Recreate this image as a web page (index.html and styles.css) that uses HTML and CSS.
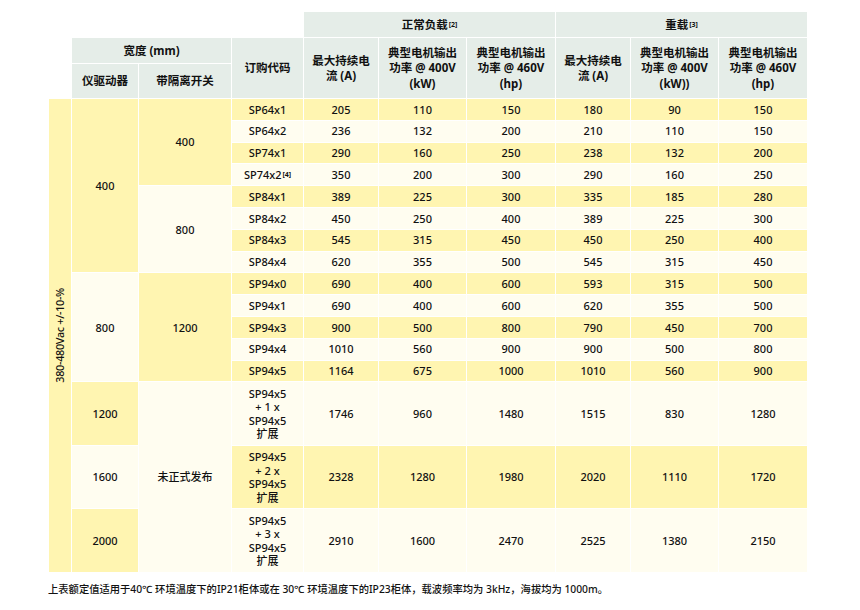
FILE: index.html
```html
<!DOCTYPE html>
<html lang="zh-CN">
<head>
<meta charset="utf-8">
<title>额定值表</title>
<link rel="stylesheet" href="styles.css">
</head>
<body>
<div class="page">
  <div class="grid">
    <div class="row">
      <div class="blank c4"></div>
      <div class="hd c3">正常负载<sup>[2]</sup></div>
      <div class="hd c3">重载<sup>[3]</sup></div>
    </div>
    <div class="row">
      <div class="blank r2"></div>
      <div class="hd c2">宽度 (mm)</div>
      <div class="hd r2">订购代码</div>
      <div class="hd r2">最大持续电<br>流 (A)</div>
      <div class="hd r2">典型电机输出<br>功率 @ 400V<br>(kW)</div>
      <div class="hd r2">典型电机输出<br>功率 @ 460V<br>(hp)</div>
      <div class="hd r2">最大持续电<br>流 (A)</div>
      <div class="hd r2">典型电机输出<br>功率 @ 400V<br>(kW))</div>
      <div class="hd r2">典型电机输出<br>功率 @ 460V<br>(hp)</div>
    </div>
    <div class="row">
      <div class="hd">仪驱动器</div>
      <div class="hd">带隔离开关</div>
    </div>

    <div class="row y">
      <div class="volt r16"><span class="vtext">380-480Vac +/-10-%</span></div>
      <div class="g y r8">400</div>
      <div class="g y r4">400</div>
      <div>SP64x1</div><div>205</div><div>110</div><div>150</div><div>180</div><div>90</div><div>150</div>
    </div>
    <div class="row l">
      <div>SP64x2</div><div>236</div><div>132</div><div>200</div><div>210</div><div>110</div><div>150</div>
    </div>
    <div class="row y">
      <div>SP74x1</div><div>290</div><div>160</div><div>250</div><div>238</div><div>132</div><div>200</div>
    </div>
    <div class="row l">
      <div>SP74x2<sup>[4]</sup></div><div>350</div><div>200</div><div>300</div><div>290</div><div>160</div><div>250</div>
    </div>
    <div class="row y">
      <div class="g l r4">800</div>
      <div>SP84x1</div><div>389</div><div>225</div><div>300</div><div>335</div><div>185</div><div>280</div>
    </div>
    <div class="row l">
      <div>SP84x2</div><div>450</div><div>250</div><div>400</div><div>389</div><div>225</div><div>300</div>
    </div>
    <div class="row y">
      <div>SP84x3</div><div>545</div><div>315</div><div>450</div><div>450</div><div>250</div><div>400</div>
    </div>
    <div class="row l">
      <div>SP84x4</div><div>620</div><div>355</div><div>500</div><div>545</div><div>315</div><div>450</div>
    </div>
    <div class="row y">
      <div class="g l r5">800</div>
      <div class="g y r5">1200</div>
      <div>SP94x0</div><div>690</div><div>400</div><div>600</div><div>593</div><div>315</div><div>500</div>
    </div>
    <div class="row l">
      <div>SP94x1</div><div>690</div><div>400</div><div>600</div><div>620</div><div>355</div><div>500</div>
    </div>
    <div class="row y">
      <div>SP94x3</div><div>900</div><div>500</div><div>800</div><div>790</div><div>450</div><div>700</div>
    </div>
    <div class="row l">
      <div>SP94x4</div><div>1010</div><div>560</div><div>900</div><div>900</div><div>500</div><div>800</div>
    </div>
    <div class="row y">
      <div>SP94x5</div><div>1164</div><div>675</div><div>1000</div><div>1010</div><div>560</div><div>900</div>
    </div>
    <div class="row l">
      <div class="g y">1200</div>
      <div class="g l r3">未正式发布</div>
      <div>SP94x5<br>+ 1 x<br>SP94x5<br>扩展</div><div>1746</div><div>960</div><div>1480</div><div>1515</div><div>830</div><div>1280</div>
    </div>
    <div class="row y">
      <div class="g l">1600</div>
      <div>SP94x5<br>+ 2 x<br>SP94x5<br>扩展</div><div>2328</div><div>1280</div><div>1980</div><div>2020</div><div>1110</div><div>1720</div>
    </div>
    <div class="row l">
      <div class="g y">2000</div>
      <div>SP94x5<br>+ 3 x<br>SP94x5<br>扩展</div><div>2910</div><div>1600</div><div>2470</div><div>2525</div><div>1380</div><div>2150</div>
    </div>
  </div>
  <p class="note">上表额定值适用于40℃ 环境温度下的IP21柜体或在 30℃ 环境温度下的IP23柜体，载波频率均为 3kHz，海拔均为 1000m。</p>
</div>
</body>
</html>
```

FILE: styles.css
```css
html, body {
  margin: 0;
  padding: 0;
  background: #ffffff;
}

body {
  font-family: "Noto Sans", "Noto Sans CJK SC", sans-serif;
  color: #111111;
}

.page {
  padding: 12px 0 0 49px;
}

.grid {
  display: grid;
  grid-template-columns: 22px 66px 92px 71px 74px 87px 88px 74px 87px 88px;
  grid-template-rows: 25px 25px 34px repeat(13, 20.8px) repeat(3, 62.5px);
  gap: 1px;
  width: 758px;
  background: #ffffff;
}

.grid > .row {
  display: contents;
}

.row > div {
  display: flex;
  align-items: center;
  justify-content: center;
  text-align: center;
  font-size: 11px;
  font-weight: 500;
  line-height: 13.5px;
}

.row.y > div {
  background: #fff5b1;
}

.row.l > div {
  background: #fffdf0;
}

.row > .g.y {
  background: #fff5b1;
}

.row > .g.l {
  background: #fffdf0;
}

.row > .blank {
  background: #ffffff;
}

.row > .hd {
  background: #e5ede8;
  font-weight: 700;
  font-size: 11.5px;
  line-height: 15.5px;
}

.row > .volt {
  background: #e5ede8;
}

.vtext {
  display: block;
  writing-mode: vertical-rl;
  transform: rotate(180deg);
  font-size: 10.8px;
  letter-spacing: -0.3px;
  line-height: 14px;
  white-space: nowrap;
}

.c2 { grid-column: span 2; }
.c3 { grid-column: span 3; }
.c4 { grid-column: span 4; }
.r2 { grid-row: span 2; }
.r3 { grid-row: span 3; }
.r4 { grid-row: span 4; }
.r5 { grid-row: span 5; }
.r8 { grid-row: span 8; }
.r16 { grid-row: span 16; }

sup {
  font-size: 7px;
  font-weight: 700;
  line-height: 0;
  vertical-align: 4px;
  margin-left: 1px;
}

.note {
  margin: 10px 0 0 -1px;
  font-size: 10.3px;
  font-weight: 500;
  line-height: 14px;
  color: #111111;
}
```
